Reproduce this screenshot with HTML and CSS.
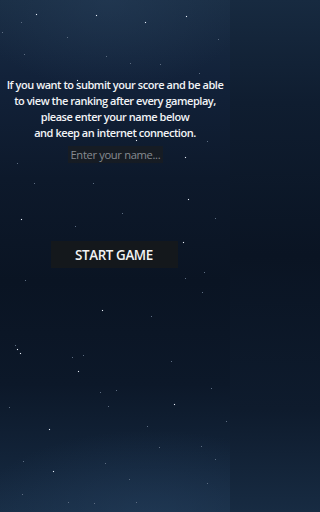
FILE: index.html
```html
<!DOCTYPE html>
<html>
<head>
<meta charset="utf-8">
<link rel="stylesheet" href="styles.css">
</head>
<body>
<div class="screen">
  <div class="stars">
    <i style="left:36px;top:14px"></i>
    <i style="left:96px;top:15px"></i>
    <i style="left:145px;top:22px"></i>
    <i style="left:186px;top:16px"></i>
    <i style="left:21px;top:22px" class="dim"></i>
    <i style="left:2px;top:32px" class="dim"></i>
    <i style="left:67px;top:37px" class="dim"></i>
    <i style="left:218px;top:39px" class="dim"></i>
    <i style="left:24px;top:54px" class="dim"></i>
    <i style="left:106px;top:56px" class="dim"></i>
    <i style="left:130px;top:63px" class="dim"></i>
    <i style="left:160px;top:64px" class="dim"></i>
    <i style="left:199px;top:73px" class="dim"></i>
    <i style="left:77px;top:80px"></i>
    <i style="left:136px;top:140px"></i>
    <i style="left:207px;top:141px" class="dim"></i>
    <i style="left:185px;top:157px"></i>
    <i style="left:17px;top:163px" class="dim"></i>
    <i style="left:34px;top:183px" class="dim"></i>
    <i style="left:93px;top:183px" class="dim"></i>
    <i style="left:188px;top:199px"></i>
    <i style="left:122px;top:213px" class="dim"></i>
    <i style="left:21px;top:219px"></i>
    <i style="left:215px;top:218px" class="dim"></i>
    <i style="left:75px;top:226px" class="dim"></i>
    <i style="left:183px;top:242px"></i>
    <i style="left:62px;top:253px" class="dim"></i>
    <i style="left:112px;top:246px" class="dim"></i>
    <i style="left:204px;top:272px" class="dim"></i>
    <i style="left:25px;top:280px" class="dim"></i>
    <i style="left:185px;top:278px" class="dim"></i>
    <i style="left:202px;top:292px" class="dim"></i>
    <i style="left:102px;top:310px"></i>
    <i style="left:151px;top:316px" class="dim"></i>
    <i style="left:15px;top:345px" class="dim"></i>
    <i style="left:17px;top:349px"></i>
    <i style="left:20px;top:353px"></i>
    <i style="left:72px;top:357px" class="dim"></i>
    <i style="left:83px;top:355px" class="dim"></i>
    <i style="left:171px;top:361px" class="dim"></i>
    <i style="left:78px;top:371px"></i>
    <i style="left:100px;top:392px" class="dim"></i>
    <i style="left:116px;top:390px" class="dim"></i>
    <i style="left:211px;top:388px" class="dim"></i>
    <i style="left:9px;top:407px" class="dim"></i>
    <i style="left:108px;top:406px" class="dim"></i>
    <i style="left:174px;top:404px"></i>
    <i style="left:49px;top:429px"></i>
    <i style="left:147px;top:426px" class="dim"></i>
    <i style="left:226px;top:421px" class="dim"></i>
    <i style="left:201px;top:446px" class="dim"></i>
    <i style="left:159px;top:447px" class="dim"></i>
    <i style="left:23px;top:461px" class="dim"></i>
    <i style="left:215px;top:459px" class="dim"></i>
    <i style="left:53px;top:471px"></i>
    <i style="left:105px;top:463px" class="dim"></i>
    <i style="left:129px;top:479px" class="dim"></i>
    <i style="left:207px;top:483px" class="dim"></i>
    <i style="left:22px;top:494px" class="dim"></i>
    <i style="left:68px;top:502px" class="dim"></i>
    <i style="left:94px;top:503px" class="dim"></i>
    <i style="left:136px;top:502px" class="dim"></i>
  </div>
  <div class="content">
    <p class="info">If you want to submit your score and be able<br>to view the ranking after every gameplay,<br>please enter your name below<br>and keep an internet connection.</p>
    <input class="name" type="text" placeholder="Enter your name...">
    <button class="start">START GAME</button>
  </div>
</div>
</body>
</html>
```
FILE: styles.css
```css
html, body {
  margin: 0;
  padding: 0;
  height: 512px;
  overflow: hidden;
}
body {
  font-family: "Open Sans", "Noto Sans", sans-serif;
  background: linear-gradient(180deg, #172a40 0%, #0f1d30 20%, #0a1423 50%, #0e1b2d 80%, #172b42 100%);
}
.screen {
  position: relative;
  width: 230px;
  height: 512px;
  background:
    radial-gradient(ellipse 140px 90px at 110px 0px, rgba(38,62,90,0.5), rgba(38,62,90,0) 100%),
    radial-gradient(ellipse 180px 90px at 150px 520px, rgba(36,62,92,0.6), rgba(36,62,92,0) 100%),
    linear-gradient(180deg, #1a2e45 0%, #12223a 15%, #0d192b 35%, #0a1423 55%, #0c1829 75%, #13253b 92%, #182d45 100%);
  overflow: hidden;
}
.stars i {
  position: absolute;
  width: 1px;
  height: 1px;
  background: #e8eef6;
  box-shadow: 0 0 1px rgba(220,230,245,0.7);
}
.stars i.dim {
  background: #5d6d82;
  box-shadow: none;
}
.content {
  position: relative;
  display: flex;
  flex-direction: column;
  align-items: center;
  padding-top: 77px;
}
.info {
  margin: 0;
  color: #f2f4f6;
  font-size: 11px;
  line-height: 16px;
  text-align: center;
  font-weight: 600;
  letter-spacing: -0.45px;
  white-space: nowrap;
}
.name {
  margin-top: 5px;
  width: 95px;
  height: 17px;
  box-sizing: border-box;
  border: none;
  outline: none;
  background: rgba(24,28,34,0.85);
  color: #e0e0e0;
  font-family: "Open Sans", sans-serif;
  font-size: 11.2px;
  letter-spacing: -0.35px;
  padding: 0 2px 0 3px;
  text-align: left;
}
.name::placeholder {
  color: #868b91;
}
.start {
  margin-top: 78px;
  margin-left: -2px;
  width: 127px;
  height: 27px;
  border: none;
  background: #14181c;
  color: #f2f3f4;
  font-family: "Open Sans", sans-serif;
  font-size: 13.4px;
  font-weight: 600;
  letter-spacing: -0.4px;
  padding: 0;
}
```
